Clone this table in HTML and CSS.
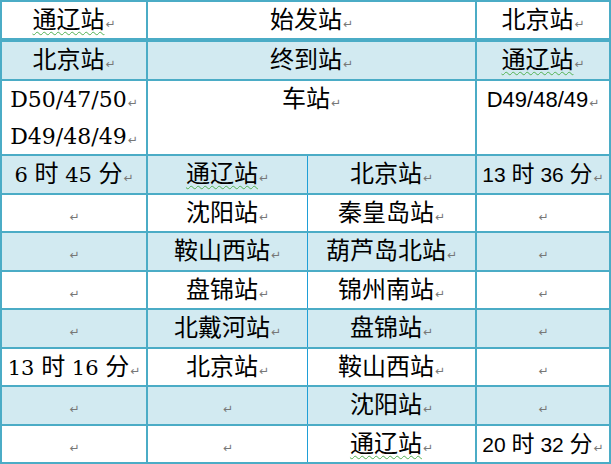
FILE: index.html
```html
<!DOCTYPE html>
<html>
<head>
<meta charset="utf-8">
<title>通辽站 - 北京站</title>
<link rel="stylesheet" href="styles.css">
</head>
<body>
<table class="schedule">
  <colgroup>
    <col class="c1"><col class="c2"><col class="c3"><col class="c4">
  </colgroup>
  <tr class="r-head">
    <td><span class="wavy">通辽站</span><span class="pm">↵</span></td>
    <td colspan="2">始发站<span class="pm">↵</span></td>
    <td>北京站<span class="pm">↵</span></td>
  </tr>
  <tr class="r-sub shade">
    <td>北京站<span class="pm">↵</span></td>
    <td colspan="2">终到站<span class="pm">↵</span></td>
    <td><span class="wavy">通辽站</span><span class="pm">↵</span></td>
  </tr>
  <tr class="r-train">
    <td><span class="lat">D50/47/50</span><span class="pm">↵</span><br><span class="lat">D49/48/49</span><span class="pm">↵</span></td>
    <td colspan="2">车站<span class="pm">↵</span></td>
    <td class="sans"><span class="lat">D49/48/49</span><span class="pm">↵</span></td>
  </tr>
  <tr class="r shade">
    <td class="time"><span class="lat">6 </span>时<span class="lat"> 45 </span>分<span class="pm">↵</span></td>
    <td class="mid-r"><span class="wavy">通辽站</span><span class="pm">↵</span></td>
    <td class="mid-l">北京站<span class="pm">↵</span></td>
    <td class="sans time"><span class="lat">13 </span>时<span class="lat"> 36 </span>分<span class="pm">↵</span></td>
  </tr>
  <tr class="r">
    <td><span class="pm">↵</span></td>
    <td class="mid-r">沈阳站<span class="pm">↵</span></td>
    <td class="mid-l">秦皇岛站<span class="pm">↵</span></td>
    <td><span class="pm">↵</span></td>
  </tr>
  <tr class="r shade">
    <td><span class="pm">↵</span></td>
    <td class="mid-r">鞍山西站<span class="pm">↵</span></td>
    <td class="mid-l">葫芦岛北站<span class="pm">↵</span></td>
    <td><span class="pm">↵</span></td>
  </tr>
  <tr class="r">
    <td><span class="pm">↵</span></td>
    <td class="mid-r">盘锦站<span class="pm">↵</span></td>
    <td class="mid-l">锦州南站<span class="pm">↵</span></td>
    <td><span class="pm">↵</span></td>
  </tr>
  <tr class="r shade">
    <td><span class="pm">↵</span></td>
    <td class="mid-r">北戴河站<span class="pm">↵</span></td>
    <td class="mid-l">盘锦站<span class="pm">↵</span></td>
    <td><span class="pm">↵</span></td>
  </tr>
  <tr class="r">
    <td class="time"><span class="lat">13 </span>时<span class="lat"> 16 </span>分<span class="pm">↵</span></td>
    <td class="mid-r">北京站<span class="pm">↵</span></td>
    <td class="mid-l">鞍山西站<span class="pm">↵</span></td>
    <td><span class="pm">↵</span></td>
  </tr>
  <tr class="r shade">
    <td><span class="pm">↵</span></td>
    <td class="mid-r"><span class="pm">↵</span></td>
    <td class="mid-l">沈阳站<span class="pm">↵</span></td>
    <td><span class="pm">↵</span></td>
  </tr>
  <tr class="r">
    <td><span class="pm">↵</span></td>
    <td class="mid-r"><span class="pm">↵</span></td>
    <td class="mid-l"><span class="wavy">通辽站</span><span class="pm">↵</span></td>
    <td class="sans time"><span class="lat">20 </span>时<span class="lat"> 32 </span>分<span class="pm">↵</span></td>
  </tr>
</table>
</body>
</html>
```

FILE: styles.css
```css
html, body {
  margin: 0;
  padding: 0;
  background: #ffffff;
}

.schedule {
  border-collapse: collapse;
  table-layout: fixed;
  width: 611px;
  font-family: "DejaVu Serif", "Noto Sans CJK SC", serif;
  font-size: 24px;
  color: #000000;
}

.c1 { width: 146px; }
.c2 { width: 160.5px; }
.c3 { width: 168.5px; }
.c4 { width: 134px; }

.schedule td {
  border: 2px solid #4bacc6;
  padding: 0;
  text-align: center;
  vertical-align: middle;
  line-height: 30px;
  white-space: nowrap;
  overflow: hidden;
}

.schedule .shade td {
  background: #d2eaf1;
}

.r-head td {
  height: 35.5px;
  border-bottom-width: 4px;
}

.r-sub td {
  height: 37.5px;
}

.schedule .r-train td {
  height: 73px;
  line-height: 36.5px;
  vertical-align: top;
}

.r td {
  height: 36.5px;
}

.schedule td.mid-r {
  border-right: 1px solid #1f9fd7;
}

.schedule td.mid-l {
  border-left: 1px solid #1f9fd7;
}

.schedule td.sans {
  font-family: "Liberation Sans", "Noto Sans CJK SC", sans-serif;
}

.lat {
  font-size: 22px;
  line-height: 1;
}

.time .lat {
  font-size: 21px;
}

.schedule td.sans.time {
  font-size: 23px;
}

.wavy {
  text-decoration: underline wavy #52b152;
  text-decoration-thickness: 1px;
  text-underline-offset: 3px;
}

.pm {
  font-family: "DejaVu Sans", sans-serif;
  font-size: 12px;
  line-height: 1;
  color: #777777;
  margin-left: 1px;
}
```
